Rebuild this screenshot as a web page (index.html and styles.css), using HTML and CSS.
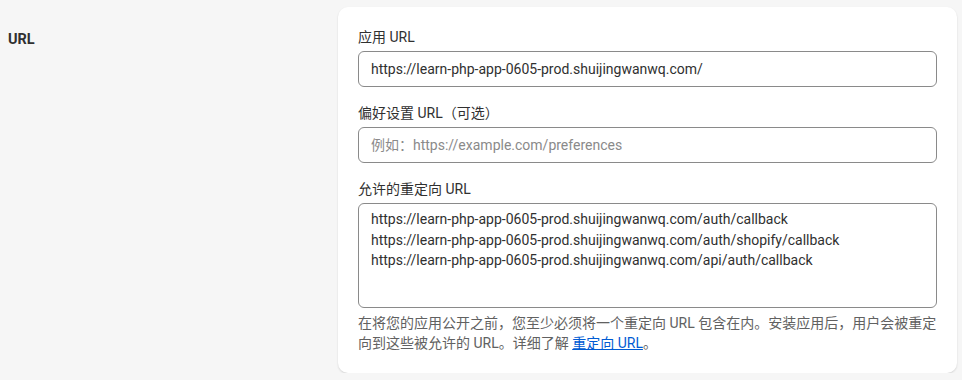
FILE: index.html
```html
<!DOCTYPE html>
<html lang="zh-CN">
<head>
    <meta charset="UTF-8">
    <meta name="viewport" content="width=device-width, initial-scale=1.0">
    <title>URL</title>
    <link rel="stylesheet" href="styles.css">
</head>
<body>
    <div class="section">
        <div class="section-heading">
            <h2>URL</h2>
        </div>
        <div class="card">
            <div class="field">
                <label for="app-url">应用 URL</label>
                <input id="app-url" class="text-input" type="text" value="https://learn-php-app-0605-prod.shuijingwanwq.com/">
            </div>
            <div class="field">
                <label for="pref-url">偏好设置 URL（可选）</label>
                <input id="pref-url" class="text-input" type="text" placeholder="例如：https://example.com/preferences">
            </div>
            <div class="field">
                <label for="redirect-urls">允许的重定向 URL</label>
                <textarea id="redirect-urls" class="text-input text-area">https://learn-php-app-0605-prod.shuijingwanwq.com/auth/callback
https://learn-php-app-0605-prod.shuijingwanwq.com/auth/shopify/callback
https://learn-php-app-0605-prod.shuijingwanwq.com/api/auth/callback</textarea>
                <p class="help-text">在将您的应用公开之前，您至少必须将一个重定向 URL 包含在内。安装应用后，用户会被重定向到这些被允许的 URL。详细了解 <a href="#">重定向 URL</a>。</p>
            </div>
        </div>
    </div>
</body>
</html>
```

FILE: styles.css
```css
body {
    margin: 0;
    padding: 7px 5px 0 8px;
    background: #f6f6f6;
    font-family: Roboto, "Noto Sans CJK SC", sans-serif;
    font-size: 14px;
    line-height: 20px;
    color: #303030;
}
.section {
    display: flex;
}
.section-heading {
    width: 330px;
    flex-shrink: 0;
    padding-top: 23px;
}
.section-heading h2 {
    margin: 0;
    font-size: 14.5px;
    line-height: 20px;
    font-weight: 700;
}
.card {
    flex: 1;
    background: #fff;
    border-radius: 10px;
    padding: 20px 20px 20px;
    box-shadow: 0 1px 2px rgba(0,0,0,0.14);
    display: flex;
    flex-direction: column;
    gap: 16px;
}
.field {
    display: flex;
    flex-direction: column;
}
.field label {
    margin-bottom: 4px;
}
.text-input {
    box-sizing: border-box;
    height: 36px;
    margin: 0;
    padding: 0 12px;
    border: 1px solid #8a8a8a;
    border-radius: 6px;
    font: inherit;
    color: #303030;
    background: #fff;
    outline: none;
}
.text-input::placeholder {
    color: #8a8a8a;
}
.text-area {
    height: 105px;
    padding: 5px 12px;
    line-height: 20.5px;
    resize: none;
    overflow: hidden;
}
.help-text {
    margin: 5px 0 0;
    color: #616161;
}
.help-text a {
    color: #005bd3;
}
```
